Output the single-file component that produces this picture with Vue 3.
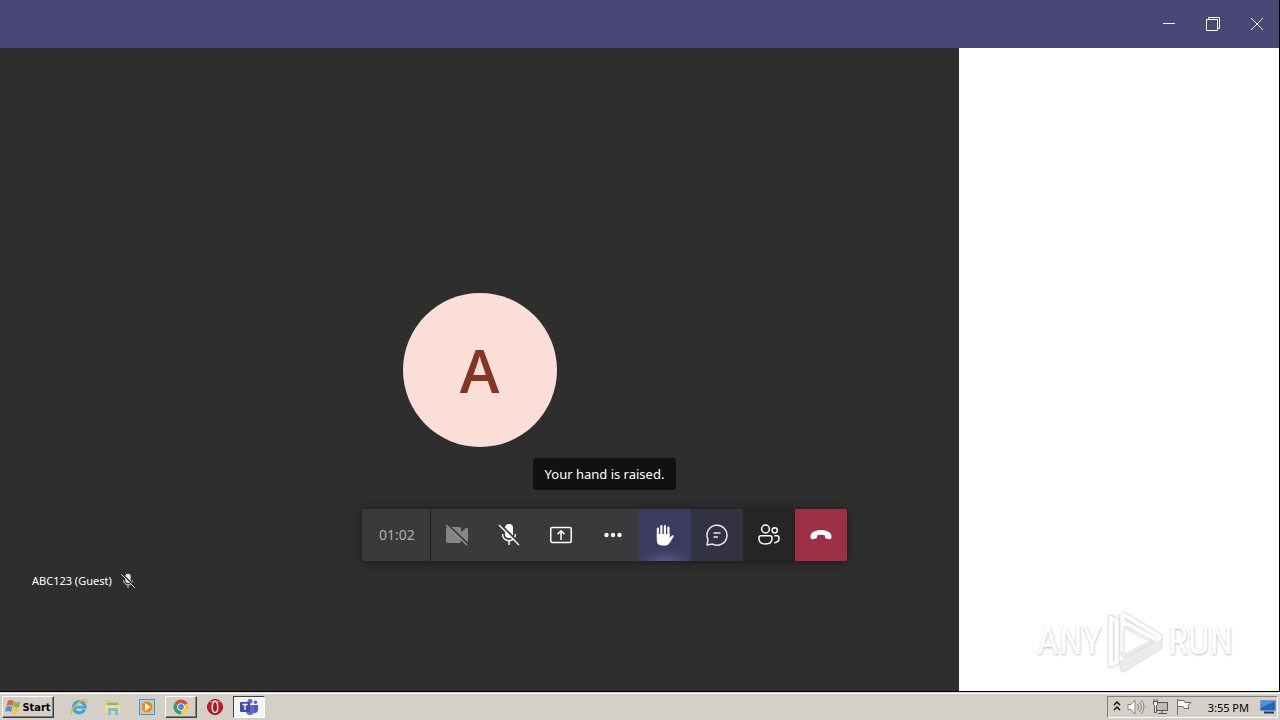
<script setup>
import { ref } from 'vue'

const duration = ref('01:02')
const guest = ref('ABC123 (Guest)')
const clock = ref('3:55 PM')
</script>

<template>
  <div class="desktop">
    <div class="window">
      <header class="titlebar">
        <button class="win-btn" aria-label="Minimize">
          <svg width="14" height="14" viewBox="0 0 14 14"><path d="M1 6.500h12" /></svg>
        </button>
        <button class="win-btn" aria-label="Restore">
          <svg width="14" height="14" viewBox="0 0 14 14"><path d="M.5 2.500h11v11H.500zM2.500 2.500v-2h11v11h-2" /></svg>
        </button>
        <button class="win-btn" aria-label="Close">
          <svg width="14" height="14" viewBox="0 0 14 14"><path d="M1 1l12 12M13 1L1 13" /></svg>
        </button>
      </header>

      <main class="content">
        <section class="stage">
          <div class="avatar">A</div>

          <div class="controls">
            <div class="tooltip" role="status">Your hand is raised.</div>
            <div class="toolbar">
              <div class="timer">{{ duration }}</div>
              <button class="tool camera" aria-label="Turn camera on">
                <svg width="24" height="24" viewBox="0 0 24 24">
                  <path d="M1 6q0-2 2-2h11q2 0 2 2v3l5-4q2-1 2 1v12q0 2-2 1l-5-4v3q0 2-2 2H3q-2 0-2-2z" fill="#858585" />
                  <path d="M2 1l21 20" stroke="#3a3a3a" stroke-width="2" />
                  <path d="M1 2l21 20" stroke="#929292" stroke-width="1.500" />
                </svg>
              </button>
              <button class="tool" aria-label="Unmute">
                <svg width="24" height="24" viewBox="0 0 24 24">
                  <rect x="8" y="1" width="8" height="14" rx="4" fill="#fff" />
                  <path d="M5.500 11c0 9 13 9 13 0M12 18v4" fill="none" stroke="#fff" stroke-width="1.500" />
                  <path d="M3 1l20 20" stroke="#3a3a3a" stroke-width="2" />
                  <path d="M2 2l20 20" stroke="#fff" stroke-width="1.500" />
                </svg>
              </button>
              <button class="tool" aria-label="Share content">
                <svg width="24" height="24" viewBox="0 0 24 24" fill="none" stroke="#fff" stroke-width="1.500">
                  <rect x="1.750" y="4.500" width="20.500" height="15" rx="1.500" />
                  <path d="M12 17V8M8.500 11.300L12 7.800l3.500 3.500" />
                </svg>
              </button>
              <button class="tool" aria-label="More actions">
                <svg width="24" height="24" viewBox="0 0 24 24" fill="#fff">
                  <circle cx="5.500" cy="12" r="2.200" /><circle cx="12" cy="12" r="2.200" /><circle cx="18.500" cy="12" r="2.200" />
                </svg>
              </button>
              <button class="tool hand" aria-label="Lower your hand">
                <svg width="24" height="24" viewBox="0 0 24 24">
                  <path d="M4.900 14V5.700M8.300 13V3M11.900 13V3M15.400 14V4.500" stroke="#fff" stroke-width="2.200" stroke-linecap="round" />
                  <path d="M3.800 11h12.700v4l2.200-2.200q1-.8 2.400-.1l-3.900 6.500q-2 3.300-4.600 3.300H8.500q-4.700-.3-4.700-5z" fill="#fff" />
                </svg>
              </button>
              <button class="tool chat" aria-label="Show conversation">
                <svg width="24" height="24" viewBox="0 0 24 24" fill="none" stroke="#e8e8f2" stroke-width="1.500" stroke-linejoin="round">
                  <path d="M2 22l1-5.500a10 10 0 1 1 4.500 4.600z" />
                  <path d="M8.500 10h7M8.500 14h4.500" />
                </svg>
              </button>
              <button class="tool people" aria-label="Show participants">
                <svg width="24" height="24" viewBox="0 0 24 24" fill="none" stroke="#fff" stroke-width="1.500">
                  <circle cx="8.500" cy="6" r="3.900" />
                  <circle cx="17.700" cy="7.300" r="2.600" />
                  <path d="M4 12.800h9q2 0 2 2v1q0 5.200-6.500 5.200T2 15.800v-1q0-2 2-2zM17.200 12.800h2.800q2 0 2 2v.7q0 4-5 4.200" />
                </svg>
              </button>
              <button class="tool hangup" aria-label="Hang up">
                <svg width="24" height="24" viewBox="0 0 24 24">
                  <path d="M1.500 13.500C1 4.700 23 4.700 22.500 13.500l-.2 1.500q-.3 1.500-2 1.200l-3-.6q-1-.2-1.200-1.200l-.4-2.100q-3.700-1-7.400 0l-.4 2.100q-.2 1-1.200 1.200l-3 .6q-1.700.3-2-1.200z" fill="#fff" />
                </svg>
              </button>
            </div>
          </div>

          <div class="nameplate">
            <span>{{ guest }}</span>
            <svg width="16" height="16" viewBox="0 0 24 24" aria-label="Muted">
              <rect x="8" y="1" width="8" height="14" rx="4" fill="#e4e4e4" />
              <path d="M5.500 11c0 9 13 9 13 0M12 18v4" fill="none" stroke="#ddd" stroke-width="1.500" />
              <path d="M3 1l20 20" stroke="#2e2e2e" stroke-width="2" />
              <path d="M2 2l20 20" stroke="#ddd" stroke-width="1.500" />
            </svg>
          </div>
        </section>

        <aside class="side">
          <div class="watermark">
            <span>ANY</span>
            <svg width="58" height="64" viewBox="0 0 60 66" fill="none" stroke-linejoin="round">
              <g stroke="#e2e2e2" stroke-width="6">
                <path d="M11 12L5 9v49l6-3zM17 5v39M17 5l38 23v5L17 13" />
                <path d="M19 20v27l26-14zM17 57l38-23v5L18 62z" />
              </g>
              <g stroke="#fff" stroke-width="4">
                <path d="M11 12L5 9v49l6-3zM17 5v39M17 5l38 23v5L17 13" />
              </g>
              <g stroke="#ededed" stroke-width="4"><path d="M19 20v27l26-14zM17 57l38-23v5L18 62z" /></g>
              <path d="M20 21v25l23-13z" fill="#fff" />
            </svg>
            <span>RUN</span>
          </div>
        </aside>
      </main>
    </div>

    <footer class="taskbar">
      <button class="start">
        <svg width="17" height="16" viewBox="0 0 17 16">
          <path d="M3 2q3-2 6 0L7.500 7q-3-2-6 0z" fill="#e8632d" />
          <path d="M9.500 2.500q3 2 6 0L14 8q-3 1.500-6-.5z" fill="#82b84a" />
          <path d="M1.200 8q3-2 6 0L6 13q-3-2-6 0z" fill="#4a91d6" />
          <path d="M7.800 8.500q3 2 6 0L12.500 14q-3 1.500-6-.5z" fill="#f4c443" />
        </svg>
        <span>Start</span>
      </button>
      <nav class="apps">
        <button class="app" aria-label="Internet Explorer">
          <svg width="18" height="18" viewBox="0 0 18 18" fill="none">
            <path d="M14.500 11.500A5.700 5.700 0 1 1 15 9H5" stroke="#36a3df" stroke-width="3" />
            <path d="M5 8h9" stroke="#91d5f3" />
            <path d="M2 16C-1 13 8 3 15 1.500c3-.3 1.500 3 0 4.500" stroke="#e7b83d" stroke-width="1.500" />
          </svg>
        </button>
        <button class="app" aria-label="Windows Explorer">
          <svg width="18" height="18" viewBox="0 0 18 18">
            <path d="M2 3l5-1 2 2h6v12H2z" fill="#e9c867" />
            <path d="M3 5h11v3H3z" fill="#6bb9a5" /><path d="M1 7h15v8H1z" fill="#f6dd8a" />
            <path d="M4 17v-6q0-1 1-1h8q1 0 1 1v6h-3v-4H7v4z" fill="#79bce8" />
          </svg>
        </button>
        <button class="app" aria-label="Media Player">
          <svg width="18" height="18" viewBox="0 0 18 18">
            <rect x="1.500" y="1.500" width="15" height="15" fill="#a7d0ed" stroke="#4d8fc6" />
            <circle cx="9" cy="9" r="6" fill="#f18a1d" stroke="#f8bf70" /><path d="M7 5l5.500 4L7 13z" fill="#fff" />
          </svg>
        </button>
        <button class="app raised" aria-label="Chrome">
          <svg width="16" height="16" viewBox="0 0 16 16">
            <path d="M8 8L1.500 4.200A7.500 7.500 0 0 1 14.500 4.200z" fill="#df4b3c" />
            <path d="M8 8L1.500 4.200A7.500 7.500 0 0 0 8 15.500z" fill="#35a357" />
            <path d="M8 8L8 15.500A7.500 7.500 0 0 0 14.500 4.200z" fill="#f5ca3f" />
            <path d="M8 4.200h6.500" stroke="#df4b3c" />
            <circle cx="8" cy="8" r="3.800" fill="#fff" /><circle cx="8" cy="8" r="2.900" fill="#4688e8" />
          </svg>
        </button>
        <button class="app" aria-label="Opera">
          <svg width="18" height="18" viewBox="0 0 18 18">
            <circle cx="9" cy="9" r="7.500" fill="#c51d25" stroke="#8d161b" /><path d="M4 4q5-3 10 0" fill="none" stroke="#ee8a83" />
            <ellipse cx="9" cy="9" rx="2.700" ry="5.500" fill="#a31920" stroke="#f1e4e4" stroke-width="1.500" />
          </svg>
        </button>
        <button class="app pressed" aria-label="Teams">
          <svg width="18" height="18" viewBox="0 0 18 18">
            <circle cx="10" cy="3.300" r="2.500" fill="#6770cf" /><circle cx="15.500" cy="4.300" r="1.700" fill="#5059c9" />
            <path d="M12 7h6v5q0 3-4 3z" fill="#5059c9" /><path d="M6 7h8v6q0 4-4 4t-4-4z" fill="#6069cf" />
            <rect x="0" y="4" width="10" height="10" rx="1" fill="#4049ac" />
            <path d="M2.500 6.500h5M5 6.500v5.500" stroke="#fff" stroke-width="1.300" />
          </svg>
        </button>
      </nav>
      <div class="tray">
        <svg width="8" height="12" viewBox="0 0 8 12" fill="none" stroke="#111" stroke-width="1.500"><path d="M1 4l3-3 3 3M1 9l3-3 3 3" /></svg>
        <svg width="18" height="18" viewBox="0 0 18 18" fill="none" stroke="#858585">
          <path d="M1 6.500h3l4-4.500v14l-4-4.500H1z" fill="#fafafa" /><path d="M10.500 6q2 3 0 6M12.500 4q3.500 5 0 10M14.500 2q5 7 0 14" />
        </svg>
        <svg width="18" height="18" viewBox="0 0 18 18" fill="#eee" stroke="#555">
          <rect x="5.500" y="4.500" width="11" height="8" fill="#bbb" /><path d="M3 1v3M6 1v3M2.500 3.500h4v3l-1 1v7H3.500v-7l-1-1zM11 13v3M7 15.500h9" />
        </svg>
        <svg width="18" height="18" viewBox="0 0 18 18" fill="#f8f8f8" stroke="#707070"><path d="M2.500 1v16M3 2.500h6l1 2h6l-3 3 1 3H9l-1-2H3" /></svg>
        <time>{{ clock }}</time>
        <svg width="16" height="14" viewBox="0 0 16 14">
          <rect x=".5" y=".5" width="15" height="10" fill="#2463b7" stroke="#6f9bd1" /><path d="M1 1h14L1 8z" fill="#4d91da" /><path d="M4 12.500h10" stroke="#23334e" stroke-width="2" />
        </svg>
      </div>
    </footer>
  </div>
</template>

<style>
body {
  background: #d4d0c8;
}
</style>

<style scoped>
.desktop {
  display: flex;
  flex-direction: column;
  min-height: 100vh;
  font-family: "Noto Sans", "Open Sans", sans-serif;
}
button {
  display: flex;
  align-items: center;
  justify-content: center;
  padding: 0;
  margin: 0;
  border: 0;
  background: transparent;
}
svg {
  display: block;
  flex: none;
}
.window {
  flex: 1;
  display: flex;
  flex-direction: column;
  border-right: 1px solid #000;
  border-bottom: 1px solid #000;
}
.titlebar {
  height: 48px;
  display: flex;
  justify-content: flex-end;
  background: #494776;
}
.win-btn {
  width: 44px;
}
.win-btn path {
  fill: none;
  stroke: #fff;
}
.content {
  flex: 1;
  display: grid;
  grid-template-columns: 3fr 1fr;
}
.stage {
  position: relative;
  display: grid;
  place-items: center;
  background: #2e2e2e;
}
.avatar {
  display: flex;
  align-items: center;
  justify-content: center;
  width: 154px;
  height: 154px;
  border-radius: 50%;
  background: #fbded8;
  color: #863426;
  font: 600 60px/80px "Open Sans", sans-serif;
}
.controls {
  position: absolute;
  left: 362px;
  bottom: 130px;
  display: flex;
  flex-direction: column;
  align-items: center;
  gap: 19px;
}
.tooltip {
  padding: 0 12px;
  border-radius: 3px;
  background: #111;
  color: #fff;
  font-size: 13px;
  line-height: 32px;
}
.toolbar {
  display: flex;
  height: 52px;
  border-radius: 2px;
  background: #3a3a3a;
  box-shadow: 0 1px 8px #181818;
}
.timer {
  width: 66px;
  padding-left: 2px;
  border-right: 1px solid #202020;
  color: #b0b0b0;
  font-size: 14px;
  line-height: 52px;
  text-align: center;
}
.tool {
  width: 52px;
}
.hand {
  background: radial-gradient(28px 16px at 50% 105%, #5e5997 0, #47446f 60%, #3b3a60 100%);
}
.chat {
  background: #323241;
}
.people {
  background: #252525;
}
.hangup {
  border-radius: 0 2px 2px 0;
  background: #9d3045;
}
.nameplate {
  position: absolute;
  left: 32px;
  bottom: 101px;
  display: flex;
  align-items: center;
  gap: 8px;
  color: #fff;
  font-size: 11px;
  line-height: 18px;
}
.side {
  display: flex;
  align-items: flex-end;
  justify-content: flex-end;
  padding: 0 46px 18px 0;
  background: #fff;
}
.watermark {
  display: flex;
  align-items: center;
  gap: 4px;
  color: #fff;
  font: 38px "Liberation Sans Narrow", "Roboto Condensed", "Liberation Sans", sans-serif;
  text-shadow: 0 1px 2px #ccc, 1px 1px 2px #ddd;
}
.watermark svg {
  filter: drop-shadow(0 0 1px #ddd);
}
.taskbar {
  display: flex;
  align-items: center;
  height: 28px;
  box-sizing: border-box;
  padding: 1px 2px 0;
  border-top: 1px solid #d4d0c8;
  box-shadow: inset 0 1px #fff;
  background: #d4d0c8;
}
.start,
.raised {
  border: 1px solid;
  border-color: #fff #404040 #404040 #fff;
  box-shadow: inset -1px -1px #808080;
}
.start {
  width: 52px;
  height: 22px;
  color: #000;
  font: bold 11px "DejaVu Sans Condensed", "DejaVu Sans", sans-serif;
}
.apps {
  display: flex;
  align-items: center;
  gap: 2px;
  margin-left: 9px;
}
.app {
  width: 32px;
  height: 22px;
}
.pressed {
  border: 1px solid;
  border-color: #404040 #fff #fff #404040;
  background: #f6f5f3;
}
.tray {
  display: flex;
  align-items: center;
  height: 22px;
  box-sizing: border-box;
  margin-left: auto;
  padding: 0 1px 0 5px;
  gap: 6px;
  border: 1px solid;
  border-color: #808080 #fff #fff #808080;
}
.tray time {
  padding: 0 5px 0 9px;
  font-size: 11px;
}
</style>
